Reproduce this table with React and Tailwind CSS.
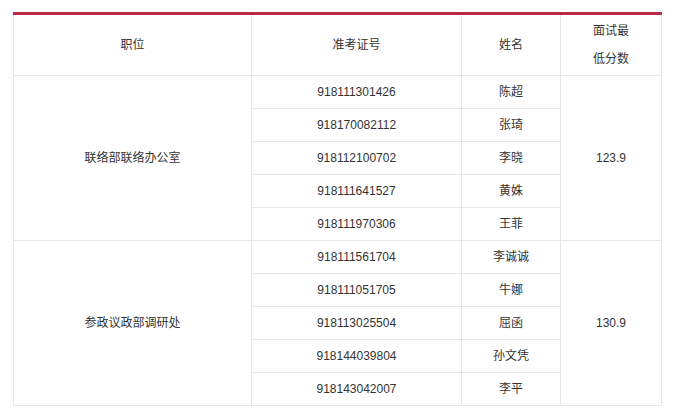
export default function App() {
  const groups = [
    {
      pos: "联络部联络办公室",
      score: "123.9",
      rows: [
        ["918111301426", "陈超"],
        ["918170082112", "张琦"],
        ["918112100702", "李晓"],
        ["918111641527", "黄姝"],
        ["918111970306", "王菲"],
      ],
    },
    {
      pos: "参政议政部调研处",
      score: "130.9",
      rows: [
        ["918111561704", "李诚诚"],
        ["918111051705", "牛娜"],
        ["918113025504", "屈函"],
        ["918144039804", "孙文凭"],
        ["918143042007", "李平"],
      ],
    },
  ];
  const cell = "border border-[#e6e6e6] text-center align-middle p-0";
  return (
    <div
      className="w-[674px] h-[420px] bg-white pt-[12px] pl-[13px] text-[12px] text-[#333]"
      style={{ fontFamily: '"Liberation Sans", Arial, "Noto Sans CJK SC", sans-serif' }}
    >
      <table className="border-collapse w-[648px] table-fixed border-t-[3px] border-t-[#bf2649]">
        <colgroup>
          <col className="w-[238px]" />
          <col className="w-[210px]" />
          <col className="w-[99px]" />
          <col className="w-[101px]" />
        </colgroup>
        <thead>
          <tr className="h-[62px]">
            <th className={cell + " font-normal border-t-[#bf2649] border-t-[3px]"}>职位</th>
            <th className={cell + " font-normal border-t-[#bf2649] border-t-[3px]"}>准考证号</th>
            <th className={cell + " font-normal border-t-[#bf2649] border-t-[3px]"}>姓名</th>
            <th className={cell + " font-normal leading-[28px] border-t-[#bf2649] border-t-[3px]"}>
              面试最
              <br />
              低分数
            </th>
          </tr>
        </thead>
        <tbody>
          {groups.map((g) =>
            g.rows.map((r, i) => (
              <tr key={r[0]} className="h-[33px]">
                {i === 0 && (
                  <td rowSpan={5} className={cell}>
                    {g.pos}
                  </td>
                )}
                <td className={cell}>{r[0]}</td>
                <td className={cell}>{r[1]}</td>
                {i === 0 && (
                  <td rowSpan={5} className={cell}>
                    {g.score}
                  </td>
                )}
              </tr>
            ))
          )}
        </tbody>
      </table>
    </div>
  );
}
